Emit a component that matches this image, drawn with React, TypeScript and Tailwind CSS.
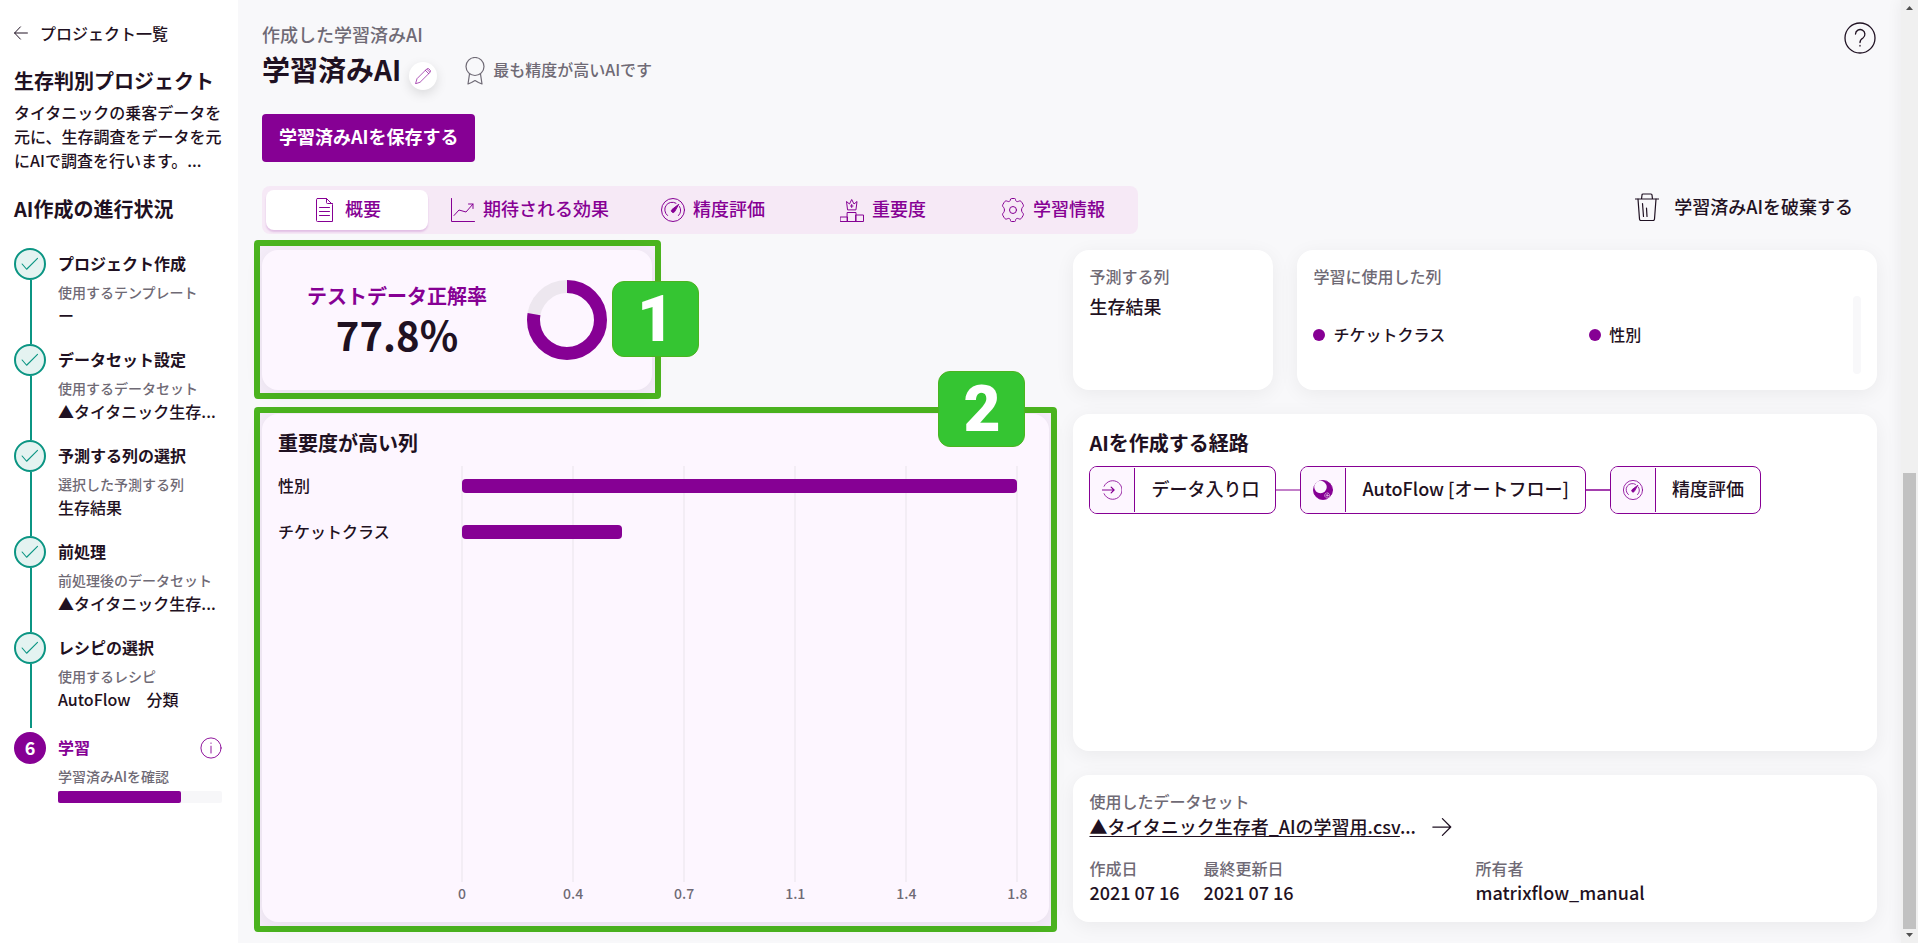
import type { ReactNode } from 'react';
import clsx from 'clsx';

interface Step {
  title: string;
  sub: string;
  value: string;
}

const steps: Step[] = [
  { title: 'プロジェクト作成', sub: '使用するテンプレート', value: 'ー' },
  { title: 'データセット設定', sub: '使用するデータセット', value: '▲タイタニック生存...' },
  { title: '予測する列の選択', sub: '選択した予測する列', value: '生存結果' },
  { title: '前処理', sub: '前処理後のデータセット', value: '▲タイタニック生存...' },
  { title: 'レシピの選択', sub: '使用するレシピ', value: 'AutoFlow　分類' },
];

const importance = [
  { name: '性別', value: 1.8 },
  { name: 'チケットクラス', value: 0.52 },
];
const ticks = ['0', '0.4', '0.7', '1.1', '1.4', '1.8'];
const maxImportance = 1.8;
const accuracy = 77.8;

const Icon = ({ size = 24, className, children }: { size?: number; className?: string; children: ReactNode }) => (
  <svg
    width={size}
    height={size}
    viewBox="0 0 24 24"
    fill="none"
    stroke="currentColor"
    strokeWidth="1"
    strokeLinecap="round"
    strokeLinejoin="round"
    aria-hidden="true"
    className={clsx('shrink-0', className)}
  >
    {children}
  </svg>
);

const DocIcon = () => (
  <Icon>
    <path d="M4.500 .5h9l6 6v17h-15a1 1 0 0 1-1-1v-21a1 1 0 0 1 1-1z" />
    <path d="M13.500 .5v4a1 1 0 0 0 1 1h5" />
    <path d="M6.500 9.500h10M6.500 13.500h10M6.500 17.500h10" />
  </Icon>
);

const TrendIcon = () => (
  <Icon>
    <path d="M.5.5v23h23" />
    <path d="M3 17.500l5-5.500 7 2 7-8M17.500 6H22v4.500" />
  </Icon>
);

const GaugeIcon = ({ size }: { size?: number }) => (
  <Icon size={size}>
    <circle cx="12" cy="12" r="11.500" />
    <path d="M6.500 17.500a7.500 7.500 0 0 1 8.500-12.300M18.500 8.500a7.500 7.500 0 0 1-1 9" />
    <path d="M17.500 6.500l-6.500 5a1.700 1.700 0 1 0 2.400 2.400z" fill="currentColor" />
  </Icon>
);

const PodiumIcon = () => (
  <Icon>
    <path d="M.5 19h7v4.500h-7zM7.500 14.500h8.500v9H7.500zM16 17h7.500v6.500H16z" />
    <path d="M7.500 11.500l-1-8 3 2.500 2.200-4.500L14 6l3-2.500-1 8zM11.700 6.500v3M10.500 8h2.500" />
  </Icon>
);

const GearIcon = () => (
  <Icon>
    <circle cx="12" cy="12" r="3.500" />
    <path d="M9.500 1.500a1 1 0 0 1 1-1h3a1 1 0 0 1 1 1c.2 2 1.500 2.500 3 1.800 1.500-.8 2.500-.3 3.300 1l1.200 2c.7 1.200.6 2-.5 3-1.300 1.500-1.300 3.900 0 5.400 1.100 1 1.200 1.800.5 3l-1.200 2c-.8 1.300-1.800 1.800-3.300 1-1.500-.7-2.800-.2-3 1.800a1 1 0 0 1-1 1h-3a1 1 0 0 1-1-1c-.2-2-1.500-2.500-3-1.800-1.500.8-2.500.3-3.300-1l-1.200-2c-.7-1.200-.6-2 .5-3 1.300-1.500 1.300-3.900 0-5.400-1.100-1-1.200-1.800-.5-3l1.200-2c.8-1.300 1.800-1.800 3.300-1 1.500.7 2.800.2 3-1.800z" />
  </Icon>
);

const ArrowRight = ({ className }: { className?: string }) => (
  <Icon size={20} className={className}>
    <path d="M1 12h21M12.500 2l10 10-10 10" strokeWidth="1.500" />
  </Icon>
);

const EntryIcon = () => (
  <Icon size={20}>
    <path d="M2.500 7.500a11.200 11.200 0 1 1 0 9" />
    <path d="M.5 12h14M11 8.500l3.500 3.500-3.500 3.500" strokeWidth="1.400" />
  </Icon>
);

const AutoFlowIcon = () => (
  <Icon size={20}>
    <circle cx="12" cy="12" r="11.500" fill="currentColor" />
    <circle cx="9" cy="8.500" r="7.500" fill="#fdf6ff" stroke="none" />
    <circle cx="17" cy="18.500" r="3" stroke="#e6c8ea" strokeDasharray="2 1.500" />
    <circle cx="17" cy="18.500" r="1" stroke="#e6c8ea" />
  </Icon>
);

const tabs = [
  { label: '概要', icon: DocIcon },
  { label: '期待される効果', icon: TrendIcon },
  { label: '精度評価', icon: GaugeIcon },
  { label: '重要度', icon: PodiumIcon },
  { label: '学習情報', icon: GearIcon },
];

const Card = ({ className, children }: { className?: string; children: ReactNode }) => (
  <section className={clsx('relative rounded-2xl px-4 pt-3.5 shadow-[0_4px_20px_rgba(0,0,0,0.06)]', className)}>
    {children}
  </section>
);

// Green annotation marker with its number
const Marker = ({ n, className }: { n: number; className: string }) => (
  <span
    className={clsx(
      'absolute z-10 flex h-[76px] w-[87px] items-center justify-center rounded-xl border border-[#4bb41f] bg-[#35c532] pt-0.5 font-[Roboto,sans-serif] text-[64px] leading-none font-black text-white',
      className
    )}
  >
    {n}
  </span>
);

const FlowNode = ({ icon, label }: { icon: ReactNode; label: string }) => (
  <div className="flex h-12 items-stretch overflow-hidden rounded-lg border border-[#860094]">
    <span className="flex w-11 items-center justify-center bg-[#fdf6ff] text-[#860094]">{icon}</span>
    <span className="my-px w-px bg-[#860094]" />
    <span className="flex items-center px-4 pb-1 text-lg whitespace-nowrap">{label}</span>
  </div>
);

function Sidebar() {
  return (
    <aside className="w-[238px] shrink-0 bg-white pt-[21px] pr-4 pl-3.5">
      <a href="#projects" className="flex items-center gap-3 text-base leading-6">
        <Icon size={14}>
          <path d="M23 12H1M11 1.500L1 12l10 10.500" strokeWidth="1.700" />
        </Icon>
        プロジェクト一覧
      </a>
      <h2 className="mt-5 text-xl leading-8 font-bold whitespace-nowrap">生存判別プロジェクト</h2>
      <p className="mt-[3px] text-base leading-6">
        タイタニックの乗客データを元に、生存調査をデータを元にAIで調査を行います。...
      </p>
      <h2 className="mt-[21px] text-xl leading-8 font-bold">AI作成の進行状況</h2>

      <ol className="mt-[23px]">
        {steps.map((step, idx) => (
          <li key={idx} className={clsx('flex gap-3', idx === steps.length - 1 ? 'h-[100px]' : 'h-24')}>
            <div className={clsx('flex w-8 shrink-0 flex-col items-center', idx === steps.length - 1 && 'pb-1')}>
              <span className="flex size-8 shrink-0 items-center justify-center rounded-full border-2 border-[#0b9583] bg-[#e4f3f1] text-[#0b9583]">
                <Icon size={18}>
                  <path d="M1.500 12l6 7L22 4.500" strokeWidth="1.500" />
                </Icon>
              </span>
              <span className="ml-0.5 w-0.5 grow bg-[#0b9583]" />
            </div>
            <div className="grow whitespace-nowrap">
              <h3 className="text-base leading-[30px] font-bold">{step.title}</h3>
              <p className="mt-1 text-sm leading-5 text-[#6f6a75]">{step.sub}</p>
              <p className="mt-px text-base leading-6">{step.value}</p>
            </div>
          </li>
        ))}
        <li className="flex gap-3">
          <span className="flex size-8 shrink-0 items-center justify-center rounded-full bg-[#860094] pb-0.5 text-lg font-bold text-white">
            6
          </span>
          <div className="grow">
            <div className="flex h-8 items-center justify-between text-[#860094]">
              <h3 className="pb-0.5 text-base font-bold">学習</h3>
              <button type="button" aria-label="詳細">
                <Icon size={22}>
                  <circle cx="12" cy="12" r="11" />
                  <path d="M12 10v7.500M12 6.500v.5" />
                </Icon>
              </button>
            </div>
            <p className="mt-0.5 text-sm leading-5 text-[#6f6a75]">学習済みAIを確認</p>
            <div className="mt-[5px] h-3 rounded-xs bg-[#f7f7f9]">
              <div className="h-full w-3/4 rounded-xs bg-[#860094]" />
            </div>
          </div>
        </li>
      </ol>
    </aside>
  );
}

function Header() {
  return (
    <header>
      <div className="flex justify-between">
        <div>
          <p className="text-lg leading-[26px] text-[#6f6a75]">作成した学習済みAI</p>
          <div className="flex h-10 items-center">
            <h1 className="pt-[3px] text-[28px] leading-10 font-bold">学習済みAI</h1>
            <button
              type="button"
              aria-label="名前を編集"
              className="mt-[18px] ml-2 flex size-7 items-center justify-center rounded-full bg-white text-[#860094] shadow-[0_4px_12px_rgba(0,0,0,0.12)]"
            >
              <Icon size={16}>
                <path d="M1 23l2-7L17.500 1.500a2.500 2.500 0 0 1 3.500 0l1.500 1.500a2.500 2.500 0 0 1 0 3.500L8 21zM15.500 3.500l5 5M18 2l4 4" />
              </Icon>
            </button>
            <svg width="20" height="28" viewBox="0 0 20 28" fill="none" stroke="#6f6a75" strokeWidth="1.200" className="mt-2 ml-7">
              <circle cx="10" cy="9.500" r="9" />
              <path d="M4.500 17L3 27l3.500-1.500L10 23.500l3.500 2L17 27l-1.500-10" strokeLinejoin="round" />
            </svg>
            <span className="mt-1 ml-2 text-base text-[#6f6a75]">最も精度が高いAIです</span>
          </div>
          <button
            type="button"
            className="mt-[27px] h-12 rounded bg-[#860094] px-[17px] pb-1 text-lg font-bold text-white"
          >
            学習済みAIを保存する
          </button>
        </div>
        <button type="button" aria-label="ヘルプ" className="self-start">
          <svg width="34" height="34" viewBox="0 0 34 34" fill="none" stroke="#1f1122" strokeLinecap="round">
            <circle cx="17" cy="17" r="15" strokeWidth="1.300" />
            <path d="M12.500 13a4.700 4.700 0 1 1 7.500 4c-2 1.200-3 2-3 4.500M17 24.500v.5" strokeWidth="1.300" />
          </svg>
        </button>
      </div>

      <div className="mt-6 flex h-12 items-center justify-between">
        <nav className="flex gap-2 rounded-lg bg-[#f6e9f6] p-1">
          {tabs.map(({ label, icon: TabIcon }, idx) => (
            <button
              key={label}
              type="button"
              className={clsx(
                'flex h-10 min-w-[162px] items-center justify-center gap-2 rounded-lg px-[15px] text-lg whitespace-nowrap text-[#860094]',
                idx === 0 && 'bg-white shadow-[0_2px_2px_rgba(134,0,148,0.18)]'
              )}
            >
              <TabIcon />
              <span className="pb-1">{label}</span>
            </button>
          ))}
        </nav>
        <button type="button" className="mr-6 flex items-center gap-[15px] pb-1.5 text-lg">
          <svg width="24" height="28" viewBox="0 0 24 28" fill="none" stroke="#1f1122" strokeWidth="1.200" strokeLinecap="round">
            <path d="M.5 6h23M6.500 6l.5-4a1 1 0 0 1 1-1h8a1 1 0 0 1 1 1l.5 4" />
            <path d="M3 6l1.500 20a1.500 1.500 0 0 0 1.500 1.500h12a1.500 1.500 0 0 0 1.500-1.500L21 6" />
            <path d="M7.500 10.500l1 13M11.500 15l.5 8.500" />
          </svg>
          <span className="pb-0.5">学習済みAIを破棄する</span>
        </button>
      </div>
    </header>
  );
}

function AccuracyCard() {
  return (
    <div className="relative w-[390px]">
      <div className="absolute -top-2.5 -right-[9px] -bottom-[9px] -left-2 rounded border-6 border-[#4bb41f] bg-[#f5edf9]" />
      <Card className="flex h-[140px] items-center bg-[#fdf6ff] pb-3.5">
        <div className="ml-[29px] w-[180px] pb-1 text-center">
          <h2 className="text-xl leading-8 font-bold whitespace-nowrap text-[#860094]">テストデータ正解率</h2>
          <p className="text-[40px] leading-[44px] font-bold">{accuracy}%</p>
        </div>
        <svg width="80" height="80" viewBox="0 0 80 80" fill="none" strokeWidth="13" className="ml-10">
          <circle cx="40" cy="40" r="33.500" stroke="#ede7ef" />
          <circle
            cx="40"
            cy="40"
            r="33.500"
            stroke="#860094"
            pathLength={100}
            strokeDasharray={`${accuracy} 100`}
            transform="rotate(-90 40 40)"
          />
        </svg>
      </Card>
      <Marker n={1} className="top-[31px] -right-[47px]" />
    </div>
  );
}

function ImportanceCard() {
  return (
    <div className="relative flex">
      <div className="absolute -top-[7px] -right-2 -bottom-2.5 -left-2 rounded border-6 border-[#4bb41f] bg-[#f5edf9]" />
      <Card className="flex grow flex-col bg-[#fdf6ff] pb-4">
        <h2 className="text-xl leading-[30px] font-bold">重要度が高い列</h2>
        <div className="relative mt-2 flex grow flex-col pr-4">
          {/* grid lines sit behind the bars */}
          <div className="absolute top-0 right-4 bottom-6 left-[184px] flex justify-between">
            {ticks.map((t) => (
              <div key={t} className="flex w-0 flex-col items-center">
                <span className="w-0.5 grow bg-[#f3edf5]" />
              </div>
            ))}
          </div>
          <ul className="relative grow">
            {importance.map((row) => (
              <li key={row.name} className="flex h-[46px] items-start">
                <span className="w-[184px] shrink-0 text-base leading-[38px]">{row.name}</span>
                <div className="flex h-10 grow items-center">
                  <div
                    className="h-3.5 rounded bg-[#860094]"
                    style={{ width: `${(row.value / maxImportance) * 100}%` }}
                  />
                </div>
              </li>
            ))}
          </ul>
          <div className="ml-[184px] flex h-6 justify-between text-sm leading-[22px] text-[#6f6a75]">
            {ticks.map((t) => (
              <span key={t} className="flex w-0 justify-center">{t}</span>
            ))}
          </div>
        </div>
      </Card>
      <Marker n={2} className="-top-[43px] right-6" />
    </div>
  );
}

const Field = ({ label, value, className }: { label: string; value: string; className?: string }) => (
  <div className={className}>
    <dt className="text-base leading-6 text-[#6f6a75]">{label}</dt>
    <dd className="text-lg leading-6 whitespace-nowrap">{value}</dd>
  </div>
);

function Scrollbar() {
  return (
    <div className="z-10 flex w-[17px] shrink-0 flex-col items-center bg-[#f0f0f0] py-1.5 shadow-[-2px_0_14px_rgba(0,0,0,0.05)]" aria-hidden="true">
      <svg width="7" height="4" viewBox="0 0 7 4"><path d="M0 4L3.500 0 7 4z" fill="#505050" /></svg>
      <div className="grow" />
      <div className="h-[49%] w-[13px] bg-[#c1c1c1]" />
      <svg width="7" height="4" viewBox="0 0 7 4" className="mt-1"><path d="M0 0l3.500 4L7 0z" fill="#505050" /></svg>
    </div>
  );
}

export default function App() {
  return (
    <div className="flex min-h-screen bg-[#f8f8fa] font-['Noto_Sans_CJK_JP',sans-serif] font-medium text-[#1f1122]">
      <Sidebar />
      <main className="flex min-w-0 grow flex-col px-6 pt-[21px] pb-[21px]">
        <Header />

        <div className="mt-4 grid grow grid-cols-[49fr_50fr] grid-rows-[auto_1fr] gap-6">
          <AccuracyCard />
          <div className="flex gap-6">
            <Card className="w-[200px] shrink-0 bg-white">
              <h2 className="text-base leading-6 text-[#6f6a75]">予測する列</h2>
              <p className="mt-1.5 text-lg leading-6">生存結果</p>
            </Card>
            <Card className="grow bg-white">
              <h2 className="text-base leading-6 text-[#6f6a75]">学習に使用した列</h2>
              <div className="mt-2 flex h-[78px]">
                <ul className="grid grow grid-cols-2 items-center gap-x-3">
                  {['チケットクラス', '性別'].map((c) => (
                    <li key={c} className="flex items-center gap-2 text-base">
                      <span className="size-3 rounded-full bg-[#860094]" />
                      <span className="pb-0.5">{c}</span>
                    </li>
                  ))}
                </ul>
                <div className="w-2 rounded-full bg-[#f8f8fa]" />
              </div>
            </Card>
          </div>

          <ImportanceCard />
          <div className="flex flex-col gap-6">
            <Card className="grow bg-white">
              <h2 className="text-xl leading-[30px] font-bold">AIを作成する経路</h2>
              <div className="mt-2 flex items-center">
                <FlowNode icon={<EntryIcon />} label="データ入り口" />
                <span className="h-0.5 w-6 bg-[#c37fc9]" />
                <FlowNode icon={<AutoFlowIcon />} label="AutoFlow [オートフロー]" />
                <span className="h-0.5 w-6 bg-[#a43fae]" />
                <FlowNode icon={<GaugeIcon size={20} />} label="精度評価" />
              </div>
            </Card>
            <Card className="bg-white pb-[18px]">
              <h2 className="text-base leading-6 text-[#6f6a75]">使用したデータセット</h2>
              <div className="mt-px flex items-center gap-4 text-lg leading-6">
                <span className="whitespace-nowrap">
                  <a href="#dataset" className="underline underline-offset-2">▲タイタニック生存者_AIの学習用.csv</a>
                  ...
                </span>
                <ArrowRight className="mt-0.5" />
              </div>
              <dl className="mt-[18px] flex">
                <Field label="作成日" value="2021 07 16" className="w-[114px]" />
                <Field label="最終更新日" value="2021 07 16" className="w-[272px]" />
                <Field label="所有者" value="matrixflow_manual" />
              </dl>
            </Card>
          </div>
        </div>
      </main>
      <Scrollbar />
    </div>
  );
}
